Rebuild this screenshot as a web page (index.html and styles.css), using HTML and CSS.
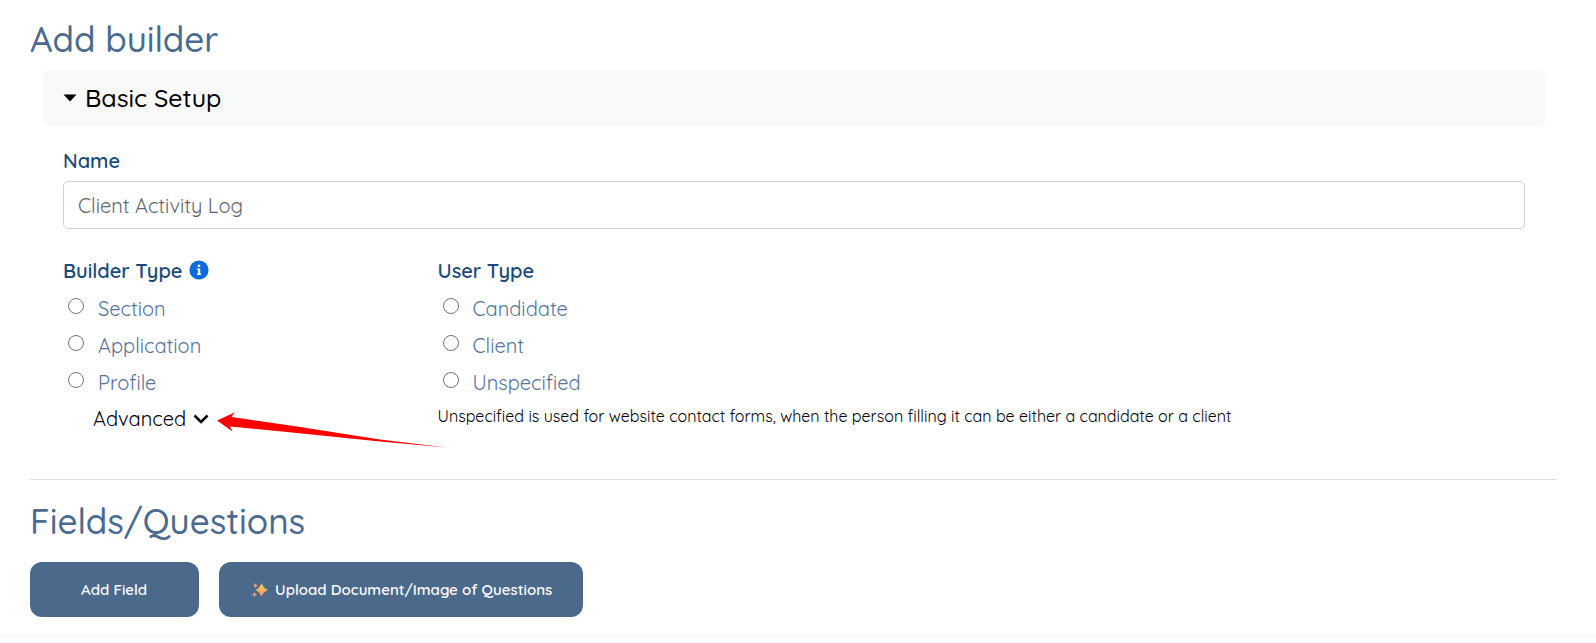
FILE: index.html
```
<!DOCTYPE html>
<html lang="en">
<head>
<meta charset="UTF-8" />
<meta name="viewport" content="width=device-width, initial-scale=1" />
<title>Add builder</title>
<link rel="stylesheet" href="styles.css">
</head>
<body>

  <main class="page">
    <h1>Add builder</h1>

    <!-- Basic setup -->
    <details class="setup" open>
      <summary>
        <svg class="caret" viewBox="0 0 14 8" aria-hidden="true"><path d="M0.5 0.5h13L7 7.5z" fill="currentColor" /></svg>
        Basic Setup
      </summary>

      <div class="setup-body">
        <label class="field-label" for="builderName">Name</label>
        <input class="text-input" type="text" id="builderName" placeholder="Client Activity Log" />

        <div class="types">
          <div>
            <fieldset>
              <legend class="field-label">Builder Type
                <svg class="info" viewBox="0 0 20 20" role="img" aria-label="Info">
                  <circle cx="10" cy="10" r="9.6" fill="#0b6bdb" />
                  <path d="M8.8 4.8h2.4v2.2H8.8zM8 8.4h3.2v5h.9v1.6H8v-1.6h.9V10H8z" fill="#fff" />
                </svg>
              </legend>
              <label class="option"><input type="radio" name="builderType" /> Section</label>
              <label class="option"><input type="radio" name="builderType" /> Application</label>
              <label class="option"><input type="radio" name="builderType" /> Profile</label>
            </fieldset>
            <div class="advanced">
              <button type="button" class="advanced-btn">Advanced
                <svg class="chevron" viewBox="0 0 16 10" aria-hidden="true"><path d="M1.5 1.5L8 8l6.5-6.5" fill="none" stroke="currentColor" stroke-width="2.6" /></svg>
              </button>
              <svg class="arrow" viewBox="0 0 230 36" aria-hidden="true"><path d="M0 8.5L17.5 0.5l-3 4.5L80 14.5 163 27.5 230 35.5 163 29.5 80 21 13 14.5l2.5 5z" fill="#ff0000" /></svg>
            </div>
          </div>

          <div>
            <fieldset>
              <legend class="field-label">User Type</legend>
              <label class="option"><input type="radio" name="userType" /> Candidate</label>
              <label class="option"><input type="radio" name="userType" /> Client</label>
              <label class="option"><input type="radio" name="userType" /> Unspecified</label>
            </fieldset>
            <p class="note">Unspecified is used for website contact forms, when the person filling it can be either a candidate or a client</p>
          </div>
        </div>
      </div>
    </details>

    <hr />

    <!-- Fields -->
    <h2>Fields/Questions</h2>
    <div class="actions">
      <button type="button" class="btn btn-add">Add Field</button>
      <button type="button" class="btn btn-upload">
        <svg class="sparkles" viewBox="0 0 16 16" aria-hidden="true">
          <defs>
            <linearGradient id="spark" x1="0" y1="0" x2="0" y2="1">
              <stop offset="0" stop-color="#ffd65c" />
              <stop offset="1" stop-color="#f78a5c" />
            </linearGradient>
          </defs>
          <path d="M9.5 1Q11 6 16 8 11 10 9.5 15 8 10 3.5 8 8 6 9.5 1z" fill="url(#spark)" />
          <path d="M3.5 1Q4 3 6 3.5 4 4 3.5 6 3 4 1 3.5 3 3 3.5 1zM2.5 10Q3 12 5 12.5 3 13 2.5 15 2 13 0 12.5 2 12 2.5 10z" fill="#f9a066" />
        </svg>
        Upload Document/Image of Questions
      </button>
    </div>
  </main>

  <footer class="page-end"></footer>

</body>
</html>
```
FILE: styles.css
```
* {
  box-sizing: border-box;
}

body {
  margin: 0;
  background: #fff;
  color: #000;
  font-family: Quicksand, Lato, sans-serif;
  font-size: 20px;
}

.page {
  padding: 15px 39px 19px 30px;
}

h1,
h2 {
  margin: 0;
  color: #4b6a8f;
  font-size: 35px;
  font-weight: 500;
  line-height: 48px;
}

/* Basic setup */
.setup {
  margin: 7px 12px 0 13px;
}

summary {
  display: flex;
  align-items: center;
  gap: 8px;
  padding: 12px 20px;
  border-radius: 5px;
  background: #f8f9fb;
  font-size: 25px;
  font-weight: 500;
  line-height: 32px;
  cursor: pointer;
}

.caret {
  width: 14px;
  height: 8px;
}

.setup-body {
  padding: 23px 20px 46px;
}

.field-label {
  display: block;
  margin-bottom: 7px;
  padding: 0;
  color: #1b4b7a;
  font-size: 20px;
  font-weight: 600;
  line-height: 24px;
}

.text-input {
  display: block;
  width: 100%;
  height: 48px;
  margin-top: 8px;
  padding: 0 14px;
  border: 1px solid #ced4da;
  border-radius: 5px;
  background: #fff;
  color: #495057;
  font: inherit;
}

.text-input::placeholder {
  color: #5f666d;
  opacity: 1;
}

.types {
  display: grid;
  grid-template-columns: 1fr 3fr;
  column-gap: 12px;
  margin-top: 30px;
}

fieldset {
  margin: 0;
  padding: 0;
  border: 0;
}

.info {
  width: 20px;
  height: 20px;
  margin-left: 1px;
  vertical-align: -2px;
}

.option {
  display: flex;
  align-items: center;
  height: 37px;
  color: #56739a;
}

.option input {
  width: 16px;
  height: 16px;
  margin: 0 14px 6px 5px;
}

.advanced {
  position: relative;
  margin: 4px 0 0 30px;
}

.advanced-btn {
  display: flex;
  align-items: center;
  gap: 7px;
  padding: 0;
  border: 0;
  background: none;
  color: #000;
  font: inherit;
  line-height: 28px;
  cursor: pointer;
}

.chevron {
  width: 16px;
  height: 10px;
}

/* Pointer laid over the form */
.arrow {
  position: absolute;
  top: 7px;
  left: 124px;
  width: 230px;
  height: 36px;
  pointer-events: none;
}

.note {
  margin: 3px 0 0;
  font-size: 16px;
  line-height: 24px;
}

hr {
  margin: 0 0 17px;
  border: 0;
  border-top: 1px solid #dfe0e2;
}

/* Fields */
.actions {
  display: flex;
  gap: 20px;
  margin-top: 17px;
}

.btn {
  display: flex;
  align-items: center;
  justify-content: center;
  gap: 7px;
  height: 55px;
  border: 0;
  border-radius: 12px;
  background: #4b698b;
  color: #fff;
  font-family: inherit;
  font-size: 15px;
  font-weight: 600;
  cursor: pointer;
}

.btn-add {
  padding: 0 52px 0 51px;
}

.btn-upload {
  padding: 0 31px 0 33px;
}

.sparkles {
  width: 16px;
  height: 16px;
}

.page-end {
  border-top: 1px solid #f5f5f6;
}
```
